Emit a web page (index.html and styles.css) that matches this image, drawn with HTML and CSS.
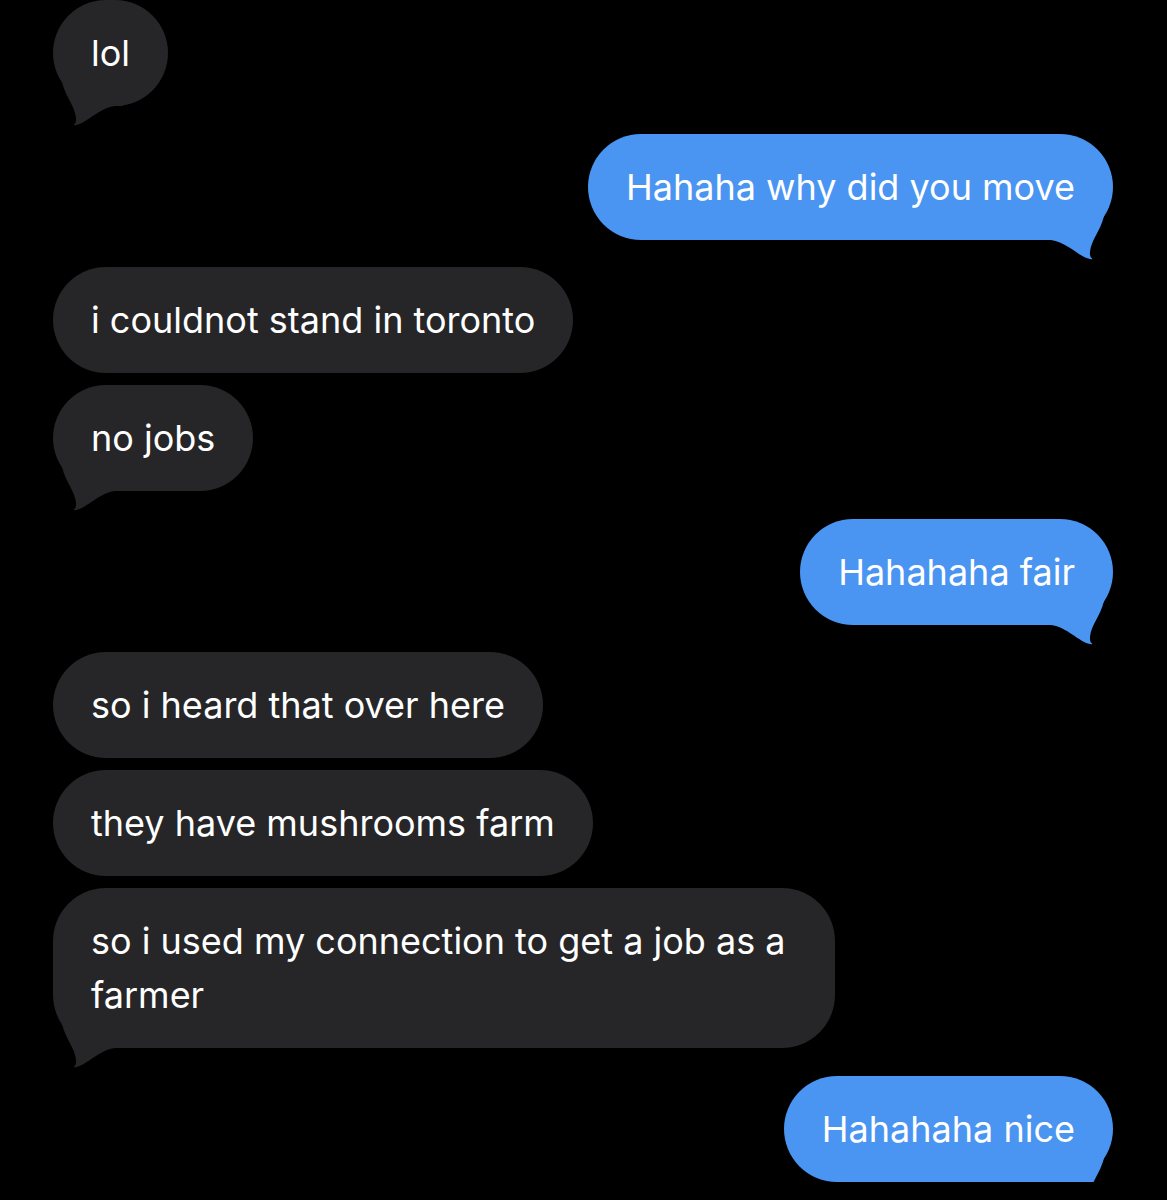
FILE: index.html
```html
<!DOCTYPE html>
<html>
<head>
    <title>Messages</title>
    <link rel="stylesheet" href="styles.css">
</head>
<body>
    <div class="thread">
        <div class="group them">
            <div class="bubble tail">lol
                <svg class="tail-svg" viewBox="0 0 70 50"><path d="M9 6 C13 22 22 30 23 42 Q23.5 47 21 48.5 Q20 49.5 23 49 C34 47 46 32 62 30 L70 30 L70 0 Z"/></svg>
            </div>
        </div>
        <div class="group me">
            <div class="bubble tail">Hahaha why did you move
                <svg class="tail-svg" viewBox="0 0 70 50"><path d="M9 6 C13 22 22 30 23 42 Q23.5 47 21 48.5 Q20 49.5 23 49 C34 47 46 32 62 30 L70 30 L70 0 Z"/></svg>
            </div>
        </div>
        <div class="group them">
            <div class="bubble">i couldnot stand in toronto</div>
            <div class="bubble tail">no jobs
                <svg class="tail-svg" viewBox="0 0 70 50"><path d="M9 6 C13 22 22 30 23 42 Q23.5 47 21 48.5 Q20 49.5 23 49 C34 47 46 32 62 30 L70 30 L70 0 Z"/></svg>
            </div>
        </div>
        <div class="group me">
            <div class="bubble tail">Hahahaha fair
                <svg class="tail-svg" viewBox="0 0 70 50"><path d="M9 6 C13 22 22 30 23 42 Q23.5 47 21 48.5 Q20 49.5 23 49 C34 47 46 32 62 30 L70 30 L70 0 Z"/></svg>
            </div>
        </div>
        <div class="group them">
            <div class="bubble">so i heard that over here</div>
            <div class="bubble">they have mushrooms farm</div>
            <div class="bubble tail">so i used my connection to get a job as a farmer
                <svg class="tail-svg" viewBox="0 0 70 50"><path d="M9 6 C13 22 22 30 23 42 Q23.5 47 21 48.5 Q20 49.5 23 49 C34 47 46 32 62 30 L70 30 L70 0 Z"/></svg>
            </div>
        </div>
        <div class="group me">
            <div class="bubble tail">Hahahaha nice
                <svg class="tail-svg" viewBox="0 0 70 50"><path d="M9 6 C13 22 22 30 23 42 Q23.5 47 21 48.5 Q20 49.5 23 49 C34 47 46 32 62 30 L70 30 L70 0 Z"/></svg>
            </div>
        </div>
    </div>
</body>
</html>
```
FILE: styles.css
```css
body { margin: 0; background: #000; font-family: Inter, "Noto Sans", sans-serif; }
.thread { display: flex; flex-direction: column; gap: 27.5px; padding: 0 54px 0 53px; }
.group { display: flex; flex-direction: column; gap: 12px; }
.them { align-items: flex-start; }
.me { align-items: flex-end; }
.bubble { position: relative; max-width: 706px; padding: 26px 38px; border-radius: 53px; font-size: 36px; line-height: 54px; color: #fff; }
.them .bubble { background: #262628; }
.me .bubble { background: #4a94f2; }
.tail-svg { position: absolute; bottom: -20px; width: 70px; height: 50px; }
.them .tail-svg { left: 0; fill: #262628; }
.me .tail-svg { right: 0; fill: #4a94f2; transform: scaleX(-1); }
```
